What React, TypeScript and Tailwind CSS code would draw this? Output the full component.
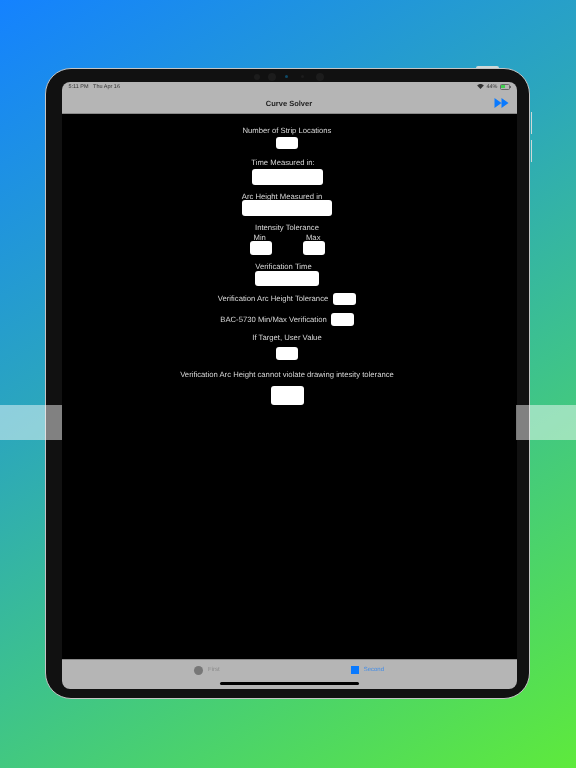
function Field({ w, h }: { w: string; h: string }) {
  return <div className={`${w} ${h} shrink-0 rounded-[3px] bg-white`} />;
}

function Label({ children, className = "" }: { children: string; className?: string }) {
  return <p className={`text-[7.7px] leading-[11px] text-[#d8d8d8] ${className}`}>{children}</p>;
}

function WifiIcon() {
  return (
    <svg viewBox="0 0 16 12" className="h-[5px] w-[7px]" fill="#333">
      <path d="M8 12 0 3.600C4.500-1.200 11.500-1.200 16 3.600Z" />
    </svg>
  );
}

function Battery() {
  return (
    <div className="flex items-center">
      <div className="h-[6px] w-[10px] rounded-[1.5px] border-[0.5px] border-[#666] p-[0.5px]">
        <div className="h-full w-[4px] bg-[#3fcf4f]" />
      </div>
      <div className="h-[2px] w-[1px] bg-[#666]" />
    </div>
  );
}

export default function App() {
  return (
    <div className="relative h-[768px] w-[576px] overflow-hidden bg-[linear-gradient(148deg,#1482ff_0%,#2ba6bd_38%,#3dc28d_62%,#5eea3c_100%)] pl-[45px] pt-[68px] font-['Liberation_Sans',sans-serif] [text-rendering:geometricPrecision]">
      {/* Device */}
      <div className="relative flex h-[631px] w-[485px] flex-col rounded-[26px] border-[1.5px] border-[#c4c4c4] bg-[#111] pb-[9.5px] pl-[15.5px] pr-[12.5px] pt-[12.5px] blur-[0.3px]">
        <div className="absolute right-[30.5px] top-[-3px] h-[1.5px] w-[23px] rounded-t-sm bg-[#cfd8d8]" />
        <div className="absolute right-[-3px] top-[42.5px] h-[22px] w-[1.5px] bg-[#cfd8d8]" />
        <div className="absolute right-[-3px] top-[70.5px] h-[22px] w-[1.5px] bg-[#cfd8d8]" />
        {/* Cameras */}
        <div className="absolute left-[207.5px] top-[3.5px] flex items-center">
          <div className="h-[6px] w-[6px] rounded-full bg-[#1c1c1c]" />
          <div className="ml-[8px] h-[8px] w-[8px] rounded-full bg-[#1c1c1c]" />
          <div className="ml-[9.5px] h-[3px] w-[3px] rounded-full bg-[#0f4a66]" />
          <div className="ml-[13px] h-[3px] w-[3px] rounded-full bg-[#1c1c1c]" />
          <div className="ml-[11.5px] h-[8px] w-[8px] rounded-full bg-[#1c1c1c]" />
        </div>

        {/* Screen */}
        <div className="flex flex-1 flex-col overflow-hidden rounded-[8px] bg-black">
          <header className="relative flex h-[32px] shrink-0 items-end justify-center border-b border-[#8a8a8a] bg-[#b5b5b5] pb-[4px]">
            <div className="absolute left-[7px] right-[6px] top-[2px] flex items-center justify-between text-[5.5px] leading-[6px] text-[#333]">
              <span>5:11 PM&nbsp;&nbsp; Thu Apr 16</span>
              <span className="flex items-center gap-[2px]">
                <WifiIcon />
                44%
                <Battery />
              </span>
            </div>
            <h1 className="text-[7.5px] font-bold leading-[11px] text-[#222]">Curve Solver</h1>
            <svg viewBox="0 0 14 10" className="absolute bottom-[5px] right-[8px] h-[10px] w-[15px]" fill="#0a7aff">
              <path d="M0 0 7 5 0 10ZM7 0 14 5 7 10Z" />
            </svg>
          </header>

          <main className="flex flex-1 flex-col items-center pr-1 pt-[11px]">
            <Label>Number of Strip Locations</Label>
            <div className="mt-[1px]"><Field w="w-[22px]" h="h-[12px]" /></div>
            <Label className="mt-[8px] pr-[8px]">Time Measured in:</Label>
            <div className="mt-[1px]"><Field w="w-[71px]" h="h-[16px]" /></div>
            <Label className="mt-[6px] pr-[10px]">Arc Height Measured in</Label>
            <div className="mt-[-2px]"><Field w="w-[90px]" h="h-[16px]" /></div>
            <Label className="mt-[6px]">Intensity Tolerance</Label>
            <div className="mt-[-1px] flex w-[75px] justify-between px-[4px]">
              <Label>Min</Label>
              <Label>Max</Label>
            </div>
            <div className="mt-[-2px] flex w-[75px] justify-between">
              <Field w="w-[22px]" h="h-[14px]" />
              <Field w="w-[22px]" h="h-[14px]" />
            </div>
            <Label className="mt-[6px] pr-[7px]">Verification Time</Label>
            <div className="mt-[-1px]"><Field w="w-[64px]" h="h-[15px]" /></div>
            <div className="mt-[7px] flex items-center gap-[5px]">
              <Label>Verification Arc Height Tolerance</Label>
              <Field w="w-[23px]" h="h-[12px]" />
            </div>
            <div className="mt-[8px] flex items-center gap-[4px]">
              <Label>BAC-5730 Min/Max Verification</Label>
              <Field w="w-[23px]" h="h-[13px]" />
            </div>
            <Label className="mt-[6px]">If Target, User Value</Label>
            <div className="mt-[4px]"><Field w="w-[22px]" h="h-[13px]" /></div>
            <Label className="mt-[9px]">Verification Arc Height cannot violate drawing intesity tolerance</Label>
            <div className="mt-[6px]"><Field w="w-[33px]" h="h-[19px]" /></div>
          </main>

          <nav className="relative flex h-[30px] shrink-0 items-start justify-center gap-[131px] border-t border-[#8a8a8a] bg-[#b5b5b5] pt-[5px]">
            <div className="flex items-center gap-[5px]">
              <div className="h-[9px] w-[9px] rounded-full bg-[#777]" />
              <span className="text-[6px] leading-[11px] text-[#8a8a8a]">First</span>
            </div>
            <div className="flex items-center gap-[5px]">
              <div className="h-[8px] w-[8px] bg-[#0a7aff]" />
              <span className="text-[6px] leading-[11px] text-[#3f8be8]">Second</span>
            </div>
            <div className="absolute bottom-[4px] left-[158px] h-[2.5px] w-[139px] rounded-full bg-black" />
          </nav>
        </div>
      </div>

      {/* Light bands over the side edges */}
      <div className="absolute left-0 top-[405px] h-[35px] w-[62px] bg-white/[0.47]" />
      <div className="absolute right-0 top-[405px] h-[35px] w-[60px] bg-white/[0.47]" />
    </div>
  );
}
